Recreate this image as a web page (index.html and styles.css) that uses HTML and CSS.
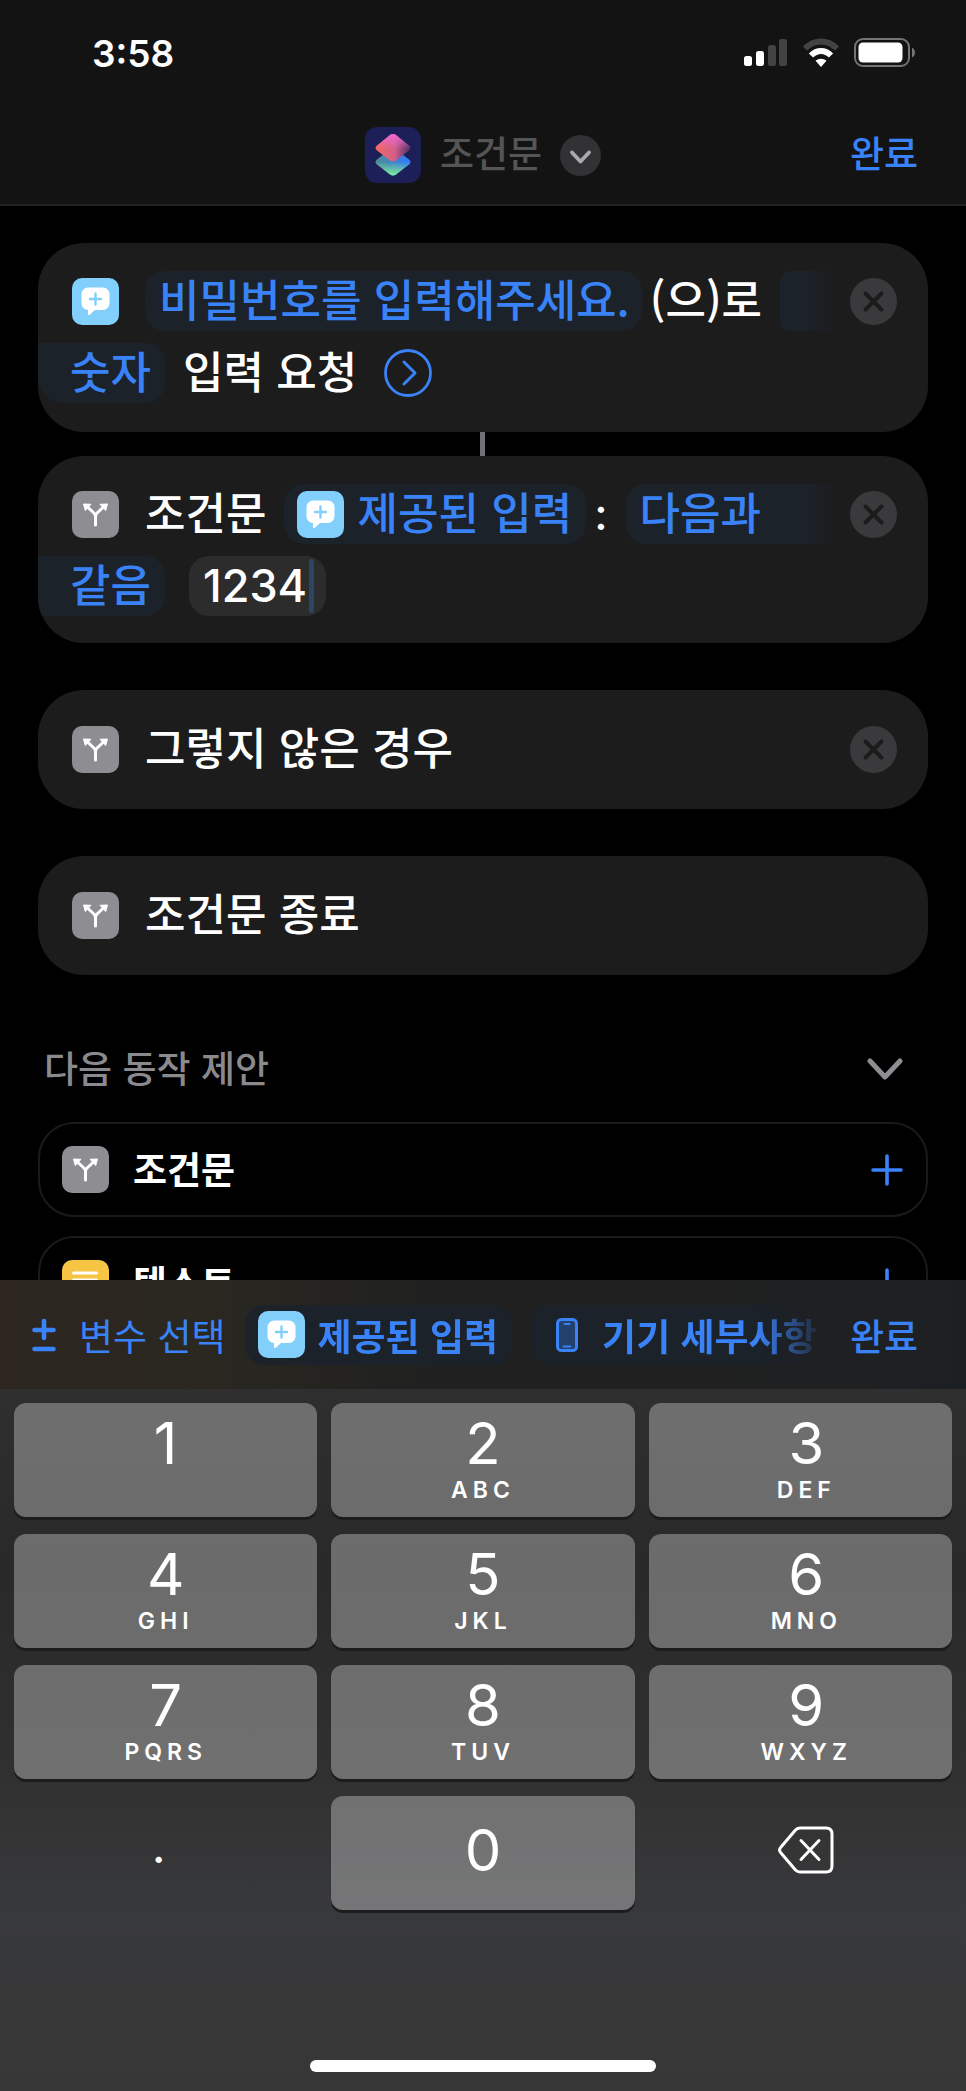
FILE: index.html
```
<!DOCTYPE html>
<html lang="ko">
<head>
	<meta charset="UTF-8">
	<meta name="viewport" content="width=device-width, initial-scale=1">
	<title>조건문</title>
	<link rel="stylesheet" href="styles.css">
</head>
<body>
	<!-- 공용 아이콘 -->
	<svg class="defs" aria-hidden="true">
		<symbol id="i-ask" viewBox="0 0 47 47">
			<path fill="#fff" d="M16 9.500h15a6.500 6.500 0 0 1 6.500 6.500v9.500a6.500 6.500 0 0 1-6.500 6.500h-8l-5.200 4.700c-.8.700-1.800.300-1.800-.8V32a6.500 6.500 0 0 1-6.500-6.500V16a6.500 6.500 0 0 1 6.500-6.500z"/>
			<path stroke="#82cffc" stroke-width="2.400" stroke-linecap="round" d="M23.500 15.500v11M18 21h11"/>
		</symbol>
		<symbol id="i-branch" viewBox="0 0 47 47">
			<path fill="none" stroke="#fff" stroke-width="3" stroke-linecap="round" stroke-linejoin="round" d="M23.500 34v-8.500c0-1.500-.6-2.500-1.600-3.500L15 15.500M23.500 25.500c0-1.500.6-2.500 1.600-3.500l6.900-6.500"/>
			<path fill="#fff" stroke="#fff" stroke-linejoin="round" d="M11.500 13l7.500.3-5.700 6.200zM35.500 13l-7.500.3 5.700 6.200z"/>
		</symbol>
		<symbol id="i-close" viewBox="0 0 47 47">
			<path stroke="#1c1c1c" stroke-width="4" stroke-linecap="round" d="M15.500 15.500l16 16M31.500 15.500l-16 16"/>
		</symbol>
		<symbol id="i-plus" viewBox="0 0 34 34">
			<path stroke="#3a82f7" stroke-width="3.600" stroke-linecap="round" d="M17 3v28M3 17h28"/>
		</symbol>
	</svg>

	<div id="phone">
		<header id="top">
			<div class="status">
				<time>3:58</time>
				<div class="signals">
					<svg width="44" height="30" viewBox="0 0 44 30">
						<rect x="0" y="18" width="8" height="10" rx="2.500" fill="#fff"/>
						<rect x="12" y="13" width="8" height="15" rx="2.500" fill="#fff"/>
						<rect x="24" y="7" width="8" height="21" rx="2.500" fill="#434343"/>
						<rect x="35" y="1" width="8" height="27" rx="2.500" fill="#434343"/>
					</svg>
					<svg width="38" height="30" viewBox="0 0 38 30">
						<path fill="none" stroke="#434343" stroke-width="6" d="M3 10.500C12 1 26 1 35 10.500"/>
						<path fill="none" stroke="#fff" stroke-width="6" d="M9 17.500c6-6 14-6 20 0"/>
						<path fill="#fff" d="M19 29l-5.500-6.200c3-2.800 8-2.800 11 0z"/>
					</svg>
					<svg width="62" height="30" viewBox="0 0 62 30">
						<rect x="1" y="1" width="54" height="27" rx="8" fill="none" stroke="#747474" stroke-width="2"/>
						<rect x="4.500" y="4.500" width="44" height="20" rx="4.500" fill="#fff"/>
						<path fill="#747474" d="M58 9.500c4 2 4 8 0 10z"/>
					</svg>
				</div>
			</div>
			<nav class="bar">
				<button class="title" type="button">
					<svg width="56" height="56" viewBox="0 0 56 56">
						<defs>
							<linearGradient id="g-low" x1="0" y1=".6" x2="1" y2=".4">
								<stop offset="0" stop-color="#4f8f95"/>
								<stop offset="1" stop-color="#2f7bff"/>
							</linearGradient>
							<linearGradient id="g-green" x1=".5" y1="0" x2=".5" y2="1">
								<stop offset=".5" stop-color="#7ff09a" stop-opacity="0"/>
								<stop offset="1" stop-color="#7ff09a"/>
							</linearGradient>
							<linearGradient id="g-up" x1="0" y1=".5" x2="1" y2=".5">
								<stop offset="0" stop-color="#f4695a"/>
								<stop offset=".55" stop-color="#d45f8c"/>
								<stop offset="1" stop-color="#4a2c62"/>
							</linearGradient>
							<linearGradient id="g-pink" x1=".5" y1="0" x2=".5" y2="1">
								<stop offset="0" stop-color="#ee6ad6"/>
								<stop offset=".55" stop-color="#ee6ad6" stop-opacity="0"/>
							</linearGradient>
						</defs>
						<rect width="56" height="56" rx="12" fill="#1c1f58"/>
						<path fill="url(#g-low)" d="M25 22.500q3-2 6 0l13 10q3 2.500 0 5l-13 10q-3 2-6 0l-13-10q-3-2.500 0-5z"/>
						<path fill="url(#g-green)" d="M25 22.500q3-2 6 0l13 10q3 2.500 0 5l-13 10q-3 2-6 0l-13-10q-3-2.500 0-5z"/>
						<path fill="url(#g-up)" d="M25 8q3-2 6 0l13 10.500q3 2.500 0 5l-13 10q-3 2-6 0l-13-10q-3-2.500 0-5z"/>
						<path fill="url(#g-pink)" d="M25 8q3-2 6 0l13 10.500q3 2.500 0 5l-13 10q-3 2-6 0l-13-10q-3-2.500 0-5z"/>
					</svg>
					<span>조건문</span>
					<svg width="41" height="41" viewBox="0 0 41 41">
						<circle cx="20.500" cy="20.500" r="20.500" fill="#323234"/>
						<path fill="none" stroke="#a9a9b0" stroke-width="3.800" stroke-linecap="round" stroke-linejoin="round" d="M12 17.500l8.500 9 8.500-9"/>
					</svg>
				</button>
				<button class="done" type="button">완료</button>
			</nav>
		</header>

		<main id="editor">
			<section class="card joined">
				<div class="line">
					<span class="ico ask"><svg><use href="#i-ask"/></svg></span>
					<button class="chip" type="button">비밀번호를 입력해주세요.</button>
					<span class="txt">(으)로</span>
					<span class="chip tail empty"></span>
					<button class="close" type="button" aria-label="삭제"><svg><use href="#i-close"/></svg></button>
				</div>
				<div class="line second">
					<button class="chip head" type="button">숫자</button>
					<span class="txt">입력 요청</span>
					<button class="more" type="button" aria-label="더 보기">
						<svg width="48" height="48" viewBox="0 0 48 48">
							<circle cx="24" cy="24" r="22.500" fill="none" stroke="#3a82f7" stroke-width="2.800"/>
							<path fill="none" stroke="#3a82f7" stroke-width="3" stroke-linecap="round" stroke-linejoin="round" d="M20 13l11 11-11 11"/>
						</svg>
					</button>
				</div>
			</section>

			<section class="card">
				<div class="line">
					<span class="ico branch"><svg><use href="#i-branch"/></svg></span>
					<span class="txt">조건문</span>
					<button class="chip var" type="button"><span class="ico ask"><svg><use href="#i-ask"/></svg></span><span>제공된 입력</span></button>
					<span class="txt colon">:</span>
					<button class="chip tail" type="button">다음과</button>
					<button class="close" type="button" aria-label="삭제"><svg><use href="#i-close"/></svg></button>
				</div>
				<div class="line second">
					<button class="chip head" type="button">같음</button>
					<label class="field">
						<input type="text" inputmode="decimal" value="1234" aria-label="값">
						<i class="caret"></i>
					</label>
				</div>
			</section>

			<section class="card single">
				<div class="line">
					<span class="ico branch"><svg><use href="#i-branch"/></svg></span>
					<span class="txt">그렇지 않은 경우</span>
					<button class="close" type="button" aria-label="삭제"><svg><use href="#i-close"/></svg></button>
				</div>
			</section>

			<section class="card single">
				<div class="line">
					<span class="ico branch"><svg><use href="#i-branch"/></svg></span>
					<span class="txt">조건문 종료</span>
				</div>
			</section>

			<section class="suggest">
				<button class="fold" type="button">
					<span>다음 동작 제안</span>
					<svg width="36" height="24" viewBox="0 0 36 24">
						<path fill="none" stroke="#8e8e92" stroke-width="5" stroke-linecap="round" stroke-linejoin="round" d="M3 4l15 16L33 4"/>
					</svg>
				</button>
				<button class="item" type="button">
					<span class="ico branch"><svg><use href="#i-branch"/></svg></span>
					<span class="name">조건문</span>
					<svg class="plus"><use href="#i-plus"/></svg>
				</button>
				<button class="item" type="button">
					<span class="ico text">
						<svg viewBox="0 0 47 47"><path stroke="#fff" stroke-width="3" stroke-linecap="round" d="M11.500 13h23M11.500 20h23M11.500 27h23M11.500 34h14"/></svg>
					</span>
					<span class="name">텍스트</span>
					<svg class="plus"><use href="#i-plus"/></svg>
				</button>
			</section>
		</main>

		<footer id="keyboard">
			<div class="tools">
				<button class="pick" type="button">
					<svg width="24" height="34" viewBox="0 0 24 34">
						<path stroke="#3a82f7" stroke-width="4.600" stroke-linecap="round" d="M12 3v17M2.500 12h19M2.500 31h19"/>
					</svg>
					변수 선택
				</button>
				<div class="vars">
					<button class="chip var" type="button"><span class="ico ask"><svg><use href="#i-ask"/></svg></span><span>제공된 입력</span></button>
					<button class="chip device" type="button">
						<svg width="22" height="34" viewBox="0 0 22 34">
							<rect x="1.500" y="1.500" width="19" height="31" rx="4" fill="#24416d" stroke="#3a82f7" stroke-width="3"/>
							<path stroke="#3a82f7" stroke-width="2" stroke-linecap="round" d="M8.500 6h5M7.500 28.500h7"/>
						</svg>
						기기 세부사항
					</button>
				</div>
				<button class="done" type="button">완료</button>
			</div>
			<div class="keys">
				<button class="key" type="button"><b>1</b></button>
				<button class="key" type="button"><b>2</b><small>ABC</small></button>
				<button class="key" type="button"><b>3</b><small>DEF</small></button>
				<button class="key" type="button"><b>4</b><small>GHI</small></button>
				<button class="key" type="button"><b>5</b><small>JKL</small></button>
				<button class="key" type="button"><b>6</b><small>MNO</small></button>
				<button class="key" type="button"><b>7</b><small>PQRS</small></button>
				<button class="key" type="button"><b>8</b><small>TUV</small></button>
				<button class="key" type="button"><b>9</b><small>WXYZ</small></button>
				<button class="key plain dot" type="button"><b>.</b></button>
				<button class="key zero" type="button"><b>0</b></button>
				<button class="key plain" type="button" aria-label="지우기">
					<svg width="56" height="48" viewBox="0 0 56 48">
						<path fill="none" stroke="#fff" stroke-width="3" stroke-linejoin="round" d="M22 2h26q6 0 6 6v32q0 6-6 6H22q-2.500 0-4.500-2L3 27q-3-3 0-6L17.500 4q2-2 4.500-2z"/>
						<path stroke="#fff" stroke-width="3" stroke-linecap="round" d="M23 14.500l18 19M41 14.500l-18 19"/>
					</svg>
				</button>
			</div>
			<div class="home"></div>
		</footer>
	</div>
</body>
</html>
```
FILE: styles.css
```
* {
	box-sizing: border-box;
}
body {
	margin: 0;
	background: #000;
	color: #fff;
	font-family: "Noto Sans CJK KR", sans-serif;
	font-size: 44px;
	font-weight: 500;
}
button, input {
	margin: 0;
	padding: 0;
	border: 0;
	background: none;
	color: inherit;
	font: inherit;
}
svg {
	display: block;
	flex: none;
}
.defs {
	display: none;
}
#phone {
	display: flex;
	flex-direction: column;
	height: 100vh;
}

/* 상단 */
#top {
	flex: none;
	border-bottom: 2px solid #222;
	background: #131313;
}
.status {
	display: flex;
	align-items: center;
	justify-content: space-between;
	height: 106px;
	padding: 0 50px 0 92px;
}
.status time {
	font-family: Inter, sans-serif;
	font-size: 37px;
	font-weight: 600;
}
.signals {
	display: flex;
	gap: 14px;
}
.bar {
	display: grid;
	grid-template-columns: 1fr auto 1fr;
	align-items: center;
	height: 98px;
	padding: 0 48px;
}
.title {
	display: flex;
	grid-column: 2;
	align-items: center;
	color: #555557;
	font-size: 37px;
	line-height: 50px;
}
.title span {
	margin: 0 18px 0 19px;
	padding-bottom: 6px;
}
.done {
	justify-self: end;
	color: #3a82f7;
	font-size: 37px;
	line-height: 50px;
}
.bar .done {
	padding-bottom: 6px;
}

/* 동작 편집 */
#editor {
	flex: 1;
	min-height: 0;
	overflow: hidden;
	padding: 37px 38px 0;
}
.card {
	position: relative;
	margin-bottom: 47px;
	padding: 28px 0 27px;
	border-radius: 46px;
	background: #1c1c1c;
	overflow: hidden;
}
.card.joined {
	margin-bottom: 24px;
	padding-bottom: 29px;
	overflow: visible;
}
.card.joined::after {
	content: "";
	position: absolute;
	top: 100%;
	left: 50%;
	width: 5px;
	height: 24px;
	margin-left: -3px;
	background: #707077;
}
.card.single {
	padding: 29px 0 30px;
}
.line {
	display: flex;
	align-items: center;
	height: 60px;
	padding: 0 31px 0 34px;
	line-height: 54px;
	white-space: nowrap;
}
.line.second {
	margin-top: 12px;
	padding-left: 0;
}
.ico {
	flex: none;
	width: 47px;
	height: 47px;
	border-radius: 10px;
}
.ico svg {
	width: 100%;
	height: 100%;
}
.ask {
	background: #82cffc;
}
.branch {
	background: #8e8d92;
}
.text {
	background: #f6c544;
}
.line > .ico {
	margin-right: 26px;
}
.txt {
	margin: 0 18px 0 8px;
	padding-bottom: 6px;
}
.ico + .txt {
	margin-left: 0;
}
.txt.colon {
	font-family: Inter, sans-serif;
	padding-bottom: 0;
}
.second .txt {
	margin: 0 27px 0 18px;
}
.chip {
	display: flex;
	flex: none;
	align-items: center;
	height: 60px;
	padding: 0 12px 6px 14px;
	border-radius: 20px;
	background: #1c222a;
	color: #3a82f7;
	line-height: 54px;
}
.chip.var {
	padding: 0 14px 0 13px;
}
.line .var span:last-child {
	padding-bottom: 6px;
}
.chip.var .ico {
	margin-right: 13px;
}
.chip.head {
	padding-left: 32px;
	padding-right: 14px;
	border-radius: 0 20px 20px 0;
}
.card.joined .chip.head {
	border-bottom-left-radius: 26px;
}
.chip.tail {
	flex: 1;
	margin-right: 15px;
	border-radius: 20px 0 0 20px;
	background: linear-gradient(to left, #1c1c1c, #1c222a 28px);
}
.chip.tail.empty {
	border-radius: 10px 0 0 10px;
}
.close {
	flex: none;
	width: 47px;
	height: 47px;
	margin-left: auto;
	border-radius: 50%;
	background: #3a3a3c;
}
.close svg {
	width: 47px;
	height: 47px;
}
.field {
	display: flex;
	align-items: center;
	height: 60px;
	margin-left: 24px;
	padding: 0 12px 0 14px;
	border-radius: 20px;
	background: #2c2c2c;
}
.field input {
	width: 106px;
	outline: 0;
	font-family: Inter, sans-serif;
	font-size: 45px;
	line-height: 54px;
}
.caret {
	width: 5px;
	height: 54px;
	border-radius: 2px;
	background: #2b4564;
}

/* 다음 동작 제안 */
.suggest {
	display: flex;
	flex-direction: column;
	gap: 19px;
	padding-top: 19px;
	font-size: 37px;
}
.fold {
	display: flex;
	align-items: center;
	justify-content: space-between;
	margin-bottom: 6px;
	padding: 0 25px 0 6px;
	color: #8a8a8e;
	line-height: 52px;
}
.fold span, .name {
	padding-bottom: 4px;
}
.item {
	display: flex;
	flex: none;
	align-items: center;
	gap: 24px;
	height: 95px;
	padding: 0 22px;
	border: 2px solid #1a1a1a;
	border-radius: 36px;
	font-weight: 700;
}
.plus {
	width: 34px;
	height: 34px;
	margin-left: auto;
}

/* 키보드 */
#keyboard {
	flex: none;
	background: linear-gradient(#323232, #292929 36%, #303030 60%, #38393b 78%, #373737);
}
.tools {
	display: flex;
	align-items: center;
	height: 109px;
	padding: 0 48px 0 32px;
	background: linear-gradient(90deg, #2d2620, #2a2820 20%, #202020 45%, #202020 70%, #1d2023);
	color: #3a82f7;
	font-size: 37px;
	white-space: nowrap;
}
.pick {
	display: flex;
	align-items: center;
	gap: 23px;
	margin-right: 19px;
	font-weight: 400;
}
.vars {
	display: flex;
	flex: 1;
	gap: 19px;
	min-width: 0;
	margin-right: 24px;
	overflow: hidden;
	-webkit-mask-image: linear-gradient(to left, transparent, #000 70px);
	mask-image: linear-gradient(to left, transparent, #000 70px);
}
.tools .chip {
	padding-bottom: 0;
	font-weight: 700;
}
.tools .device {
	gap: 24px;
	padding-left: 25px;
}
.keys {
	display: grid;
	grid-template-columns: repeat(3, 1fr);
	gap: 17px 14px;
	padding: 14px 14px 0;
	font-family: Inter, sans-serif;
}
.key {
	display: flex;
	flex-direction: column;
	align-items: center;
	height: 114px;
	padding-top: 12px;
	border-radius: 12px;
	background: rgba(255, 255, 255, .31);
	box-shadow: 0 3px 0 #1c1c1c;
}
.key:nth-child(3n) {
	padding-left: 12px;
}
.key b {
	font-size: 58px;
	font-weight: 400;
	line-height: 56px;
}
.key small {
	margin-top: 6px;
	font-size: 23px;
	font-weight: 600;
	letter-spacing: 5px;
	line-height: 26px;
}
.key.zero, .key.plain {
	justify-content: center;
	padding-top: 0;
	padding-bottom: 6px;
}
.key.plain {
	background: none;
	box-shadow: none;
}
.key.dot {
	padding-right: 14px;
	padding-bottom: 14px;
}
.dot b {
	font-size: 48px;
}
.home {
	width: 346px;
	height: 12px;
	margin: 150px auto 19px;
	border-radius: 6px;
	background: #fff;
}
```
